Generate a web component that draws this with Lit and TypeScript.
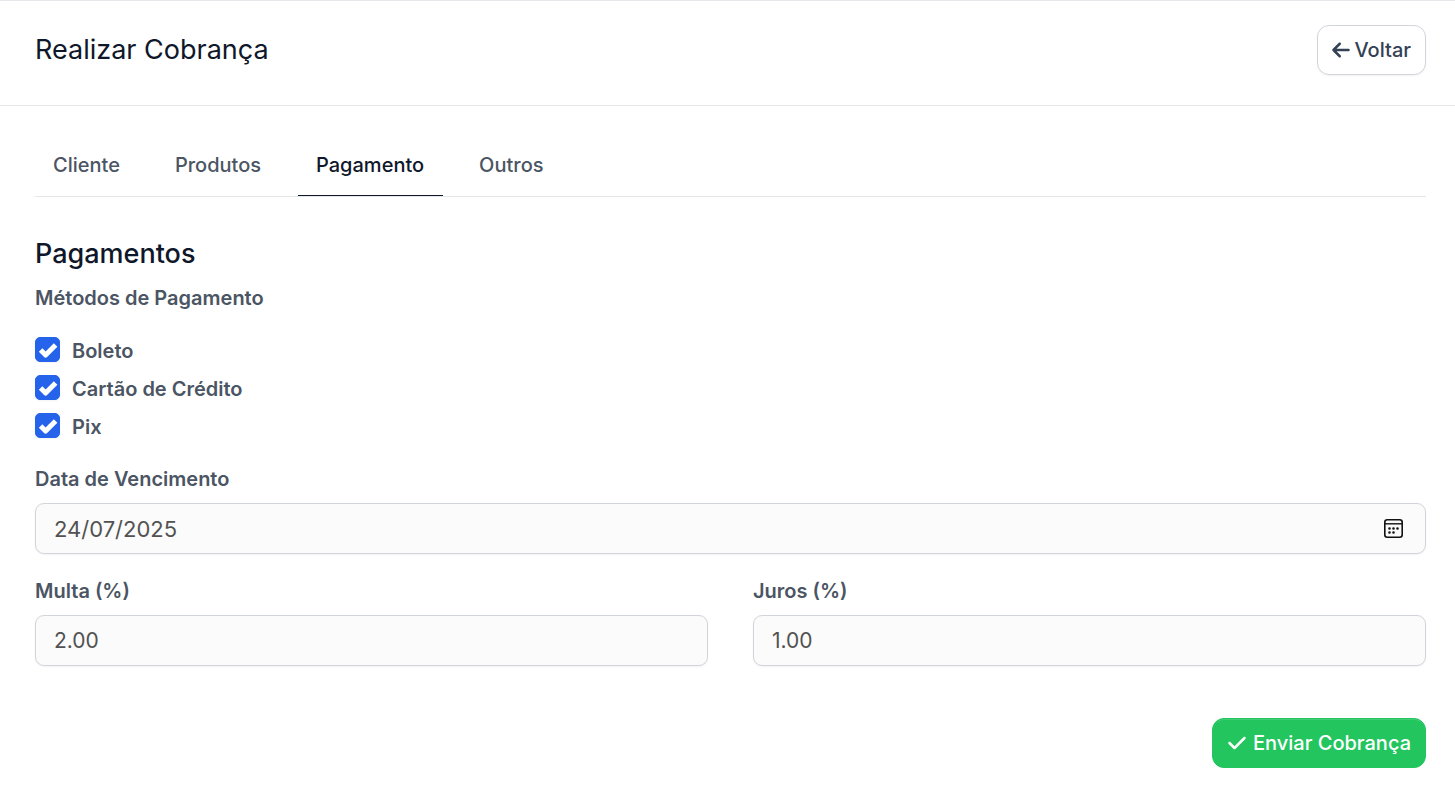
import { LitElement, html, css, svg } from "lit";
import { customElement, state } from "lit/decorators.js";

const ARROW_LEFT =
  "M9.4 233.4c-12.5 12.5-12.5 32.8 0 45.3l160 160c12.5 12.5 32.8 12.5 45.3 0s12.5-32.8 0-45.3L109.2 288 416 288c17.7 0 32-14.3 32-32s-14.3-32-32-32l-306.7 0L214.6 118.6c12.5-12.5 12.5-32.8 0-45.3s-32.8-12.5-45.3 0l-160 160z";
const CHECK =
  "M438.6 105.4c12.5 12.5 12.5 32.8 0 45.3l-256 256c-12.5 12.5-32.8 12.5-45.3 0l-128-128c-12.5-12.5-12.5-32.8 0-45.3s32.8-12.5 45.3 0L160 338.7 393.4 105.4c12.5-12.5 32.8-12.5 45.3 0z";

const glyph = (d: string) => html`
  <svg class="glyph" viewBox="0 0 448 512" aria-hidden="true">${svg`<path fill="currentColor" d=${d}></path>`}</svg>
`;

@customElement("app-root")
export class AppRoot extends LitElement {
  static styles = css`
    :host {
      display: block;
      font-family: Inter, sans-serif;
      font-size: 20px;
      line-height: 28px;
      color: #4b5563;
      background: #fff;
    }
    * {
      box-sizing: border-box;
    }
    h1,
    h2 {
      margin: 0;
      color: #0f172a;
      font-size: 27px;
      line-height: 36px;
    }
    h1 {
      font-weight: 400;
    }
    h2 {
      font-weight: 500;
    }
    button,
    input {
      font: inherit;
      color: inherit;
      margin: 0;
    }
    button {
      cursor: pointer;
    }
    .header {
      display: flex;
      justify-content: space-between;
      align-items: center;
      padding: 24px 29px 30px 35px;
      border-top: 1px solid #e5e7eb;
      border-bottom: 1px solid #e5e7eb;
    }
    .btn {
      display: inline-flex;
      align-items: center;
      gap: 4px;
      height: 50px;
      padding: 0 14px;
      border: 1px solid #d1d5db;
      border-radius: 12px;
      background: #fff;
      color: #334155;
      font-weight: 500;
      box-shadow: 0 1px 2px rgba(0, 0, 0, 0.05);
    }
    .btn.send {
      gap: 6px;
      border-color: #22c55e;
      background: #22c55e;
      color: #fff;
      box-shadow: inset 0 2px 0 -1px rgba(255, 255, 255, 0.15);
    }
    .glyph {
      width: 18px;
      height: 20px;
      flex: none;
    }
    .send .glyph {
      width: 20px;
    }
    .main {
      padding: 28px 29px 33px 35px;
    }
    .tabs {
      display: flex;
      gap: 18px;
      border-bottom: 1px solid #e5e7eb;
    }
    .tab {
      height: 62px;
      padding: 0 19px 0 18px;
      border: 0;
      background: none;
      font-weight: 500;
    }
    .tab.active {
      color: #0f172a;
      box-shadow: inset 0 -1px 0 #0f172a;
    }
    .form {
      display: flex;
      flex-direction: column;
      padding-top: 39px;
    }
    .methods {
      margin: 12px 0 20px;
      padding: 0;
      border: 0;
      font-weight: 600;
    }
    .methods legend {
      padding: 0;
      margin-bottom: 19px;
    }
    .option {
      display: flex;
      align-items: flex-start;
      gap: 12px;
      height: 38px;
      padding-top: 6px;
    }
    .check {
      appearance: none;
      width: 25px;
      height: 25px;
      border: 1px solid #d1d5db;
      border-radius: 5px;
      box-shadow: 0 1px 2px rgba(0, 0, 0, 0.05);
    }
    .check:checked {
      border-color: #2563eb;
      background: #2563eb
        url("data:image/svg+xml,%3Csvg viewBox='0 0 25 25' fill='none' stroke='white' stroke-width='5' stroke-linejoin='round' xmlns='http://www.w3.org/2000/svg'%3E%3Cpath d='M5.6 13.1l5 5L20.6 8'/%3E%3C/svg%3E")
        center / 100% no-repeat;
      background-origin: border-box;
    }
    .field {
      display: flex;
      flex-direction: column;
      gap: 10px;
    }
    .label {
      font-weight: 600;
    }
    .control {
      display: flex;
      align-items: center;
      height: 51px;
      padding: 0 18px;
      border: 1px solid #d1d5db;
      border-radius: 9px;
      background: #fbfbfb;
      box-shadow: 0 1px 2px rgba(0, 0, 0, 0.05);
    }
    .text {
      flex: 1;
      min-width: 0;
      padding: 0;
      border: 0;
      outline: 0;
      background: none;
      font-size: 21px;
      color: #525252;
    }
    .text.date {
      font-size: 22px;
    }
    .picker {
      display: flex;
      padding: 2px 3px;
      border: 0;
      background: none;
      color: #111;
    }
    .calendar {
      width: 21px;
      height: 21px;
    }
    .rates {
      display: grid;
      grid-template-columns: 1fr 1fr;
      gap: 45px;
      margin-top: 23px;
    }
    .actions {
      display: flex;
      justify-content: flex-end;
      margin-top: 52px;
    }
  `;

  @state() private active = "Pagamento";

  private tabs = ["Cliente", "Produtos", "Pagamento", "Outros"];
  private methods = ["Boleto", "Cartão de Crédito", "Pix"];

  private rate(id: string, label: string, value: string) {
    return html`
      <div class="field">
        <label class="label" for=${id}>${label}</label>
        <div class="control"><input class="text" id=${id} inputmode="decimal" .value=${value} /></div>
      </div>
    `;
  }

  render() {
    return html`
      <header class="header">
        <h1>Realizar Cobrança</h1>
        <button class="btn" type="button">${glyph(ARROW_LEFT)}<span>Voltar</span></button>
      </header>
      <main class="main">
        <nav class="tabs" role="tablist">
          ${this.tabs.map(
            (t) => html`<button
              class="tab ${t === this.active ? "active" : ""}"
              type="button"
              role="tab"
              aria-selected=${t === this.active}
              @click=${() => (this.active = t)}
            >${t}</button>`
          )}
        </nav>
        <form class="form" @submit=${(e: Event) => e.preventDefault()}>
          <h2>Pagamentos</h2>
          <fieldset class="methods">
            <legend>Métodos de Pagamento</legend>
            ${this.methods.map(
              (m) => html`<label class="option"><input class="check" type="checkbox" checked /><span>${m}</span></label>`
            )}
          </fieldset>
          <div class="field">
            <label class="label" for="due">Data de Vencimento</label>
            <div class="control">
              <input class="text date" id="due" inputmode="numeric" .value=${"24/07/2025"} />
              <button class="picker" type="button" aria-label="Abrir calendário">
                <svg class="calendar" viewBox="0 0 21 21" fill="none" stroke="currentColor" aria-hidden="true">
                  <rect x="1.8" y="1.8" width="17.4" height="17.4" rx="2.5" stroke-width="1.6"></rect>
                  <path d="M2 5.8h17" stroke-width="1.4"></path>
                  <path d="M6.5 10.5h.01M10.5 10.5h.01M14.5 10.5h.01M6.5 14.5h.01M10.5 14.5h.01" stroke-width="2.6" stroke-linecap="round"></path>
                </svg>
              </button>
            </div>
          </div>
          <div class="rates">
            ${this.rate("fine", "Multa (%)", "2.00")} ${this.rate("interest", "Juros (%)", "1.00")}
          </div>
          <div class="actions">
            <button class="btn send" type="submit">${glyph(CHECK)}<span>Enviar Cobrança</span></button>
          </div>
        </form>
      </main>
    `;
  }
}
